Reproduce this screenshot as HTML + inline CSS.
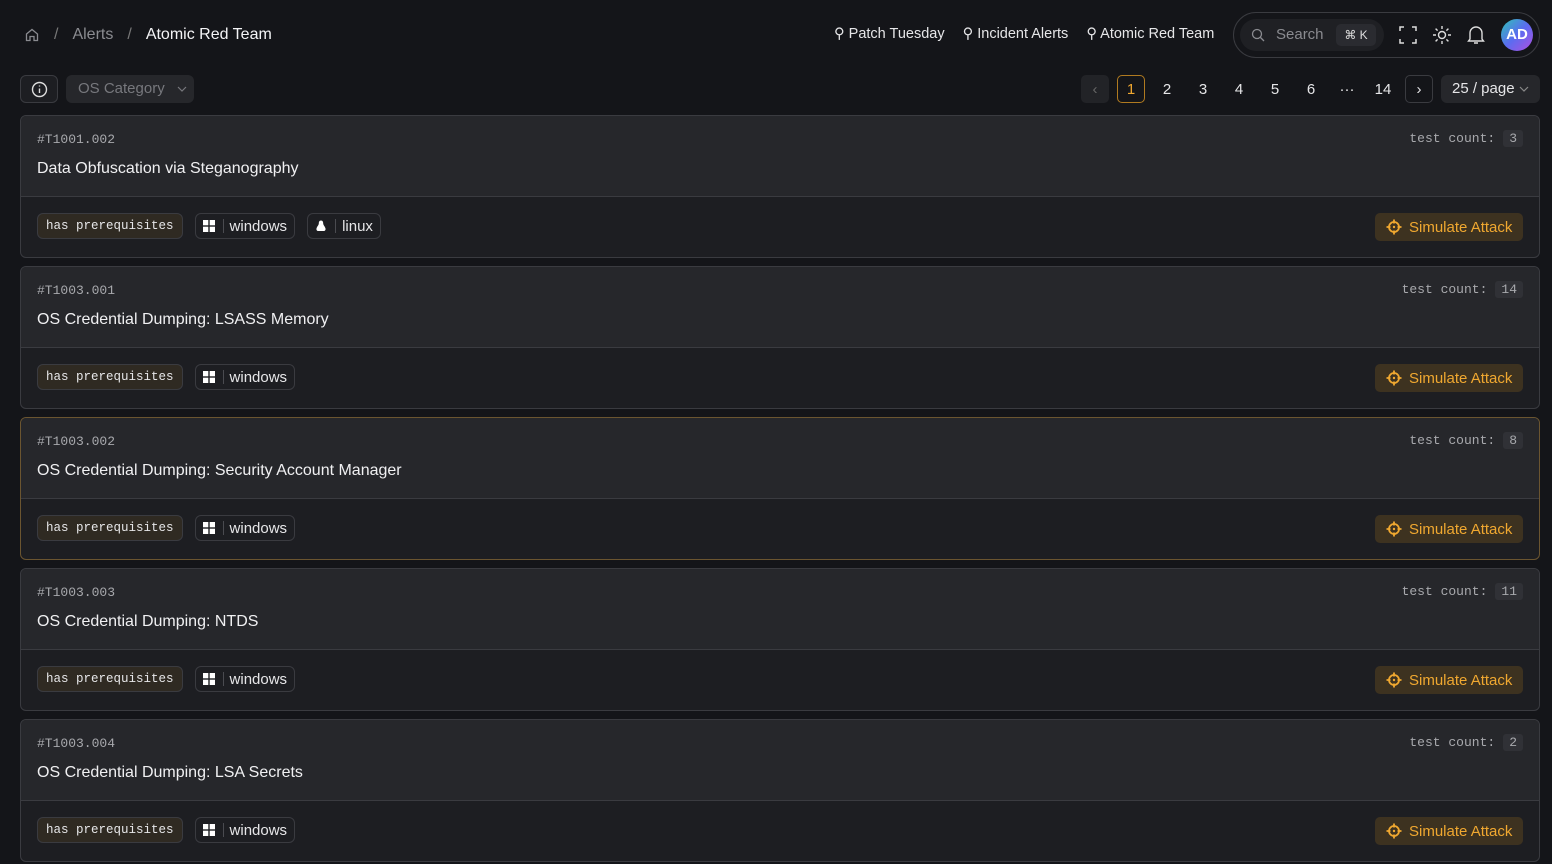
<!DOCTYPE html><html><head><style>
*{box-sizing:border-box;margin:0;padding:0}
body{width:1552px;height:864px;background:#141519;font-family:"Liberation Sans",sans-serif;color:#e6e6e8;overflow:hidden;position:relative}
.mono{font-family:"Liberation Mono",monospace}
.abs{position:absolute}
.bc{left:24px;top:24px;font-size:16px;display:flex;align-items:center;gap:14px;height:22px}
.nav{top:26px;font-size:14.5px;display:flex;gap:18px;left:834px;color:#e6e6e8}
.pill{left:1233px;top:12px;width:307px;height:46px;border:1px solid #3a3b40;border-radius:23px}
.search{left:1240px;top:19px;width:144px;height:32px;background:#1f2024;border-radius:16px;font-size:14px;color:#8a8b90}
.card{position:absolute;left:20px;width:1520px;height:143px;border:1px solid #3a3b40;border-radius:6px;overflow:hidden;background:#1d1e22}
.card .h{height:81px;background:#26272b;border-bottom:1px solid #3a3b40;position:relative}
.id{position:absolute;left:16px;top:16px;font-size:13px;color:#a8a9ad}
.t{position:absolute;left:16px;top:44px;font-size:16px;color:#f0f0f2}
.tc{position:absolute;right:16px;top:14px;font-size:13px;color:#a8a9ad;display:flex;align-items:center;gap:8px}
.tc b{font-weight:normal;background:#303136;padding:1px 6px;border-radius:3px}
.tags{position:absolute;left:16px;top:16px;display:flex;gap:12px}
.tag{height:26px;border:1px solid #3a3b40;border-radius:6px;display:flex;align-items:center;padding:0 7px;font-size:15px}
.pre{background:#2f2a22;font-size:12.5px;padding:0 8px}
.os i{display:inline-block;width:1px;height:14px;background:#4a4b50;margin:0 6px 0 8px}
.sim{position:absolute;right:16px;top:16px;height:28px;width:148px;background:#3d3220;color:#f0a830;border-radius:5px;font-size:15px;display:flex;align-items:center;padding:0 0 0 11px;gap:7px}
.pg{top:75px;height:28px;font-size:15px;display:flex;align-items:center;justify-content:center;width:28px;border-radius:5px}
</style></head><body>
<div class="abs bc"><svg width="16" height="16" viewBox="0 0 16 16" fill="none" stroke="#8a8b90" stroke-width="1.3"><path d="M2.5 7L8 2.5 13.5 7V13.5H10V9.5H6V13.5H2.5Z"/></svg><span style="color:#777">/</span><span style="color:#8a8b90">Alerts</span><span style="color:#777">/</span><span style="color:#f4f4f6">Atomic Red Team</span></div>
<div class="abs nav"><span>⚲ Patch Tuesday</span><span>⚲ Incident Alerts</span><span>⚲ Atomic Red Team</span></div>
<div class="abs pill"></div>
<div class="abs search"><svg class="abs" style="left:11px;top:9px" width="14" height="14" viewBox="0 0 14 14" fill="none" stroke="#8a8b90" stroke-width="1.3"><circle cx="6" cy="6" r="4.5"/><path d="M9.5 9.5L13 13"/></svg><span class="abs" style="left:36px;top:7px;font-size:15px">Search</span><span class="abs" style="left:96px;top:5px;width:40px;height:22px;background:#2a2b30;border-radius:5px;color:#ddd;font-size:12px;text-align:center;line-height:22px">⌘ K</span></div>
<svg class="abs" style="left:1399px;top:26px" width="18" height="18" viewBox="0 0 18 18" fill="none" stroke="#ddd" stroke-width="1.5"><path d="M1 5V1H5M13 1H17V5M17 13V17H13M5 17H1V13"/></svg>
<svg class="abs" style="left:1432px;top:25px" width="20" height="20" viewBox="0 0 20 20" fill="none" stroke="#ddd" stroke-width="1.4"><circle cx="10" cy="10" r="3.5"/><path d="M10 1v3M10 16v3M1 10h3M16 10h3M3.6 3.6l2 2M14.4 14.4l2 2M3.6 16.4l2-2M14.4 5.6l2-2"/></svg>
<svg class="abs" style="left:1467px;top:25px" width="18" height="20" viewBox="0 0 18 20" fill="none" stroke="#ddd" stroke-width="1.4"><path d="M3 14V8a6 6 0 0 1 12 0v6l1.5 2h-15z M7 18h4"/></svg>
<div class="abs" style="left:1501px;top:19px;width:32px;height:32px;border-radius:50%;background:linear-gradient(135deg,#2ec4b6,#5b6cf0,#b04fe0);color:#fff;font-weight:bold;font-size:15px;text-align:center;line-height:32px">AD</div>
<div class="abs" style="left:20px;top:75px;width:38px;height:28px;border:1px solid #3a3b40;border-radius:6px;background:#1d1e22"><svg class="abs" style="left:10px;top:5px" width="17" height="17" viewBox="0 0 17 17" fill="none" stroke="#ddd" stroke-width="1.4"><circle cx="8.5" cy="8.5" r="7"/><path d="M8.5 7.5v4.5M8.5 4.5v1"/></svg></div>
<div class="abs" style="left:66px;top:75px;width:128px;height:28px;border-radius:6px;background:#26272b;color:#77787d;font-size:15px;line-height:28px;padding-left:12px">OS Category <svg width="10" height="6" style="margin-left:8px;vertical-align:middle" viewBox="0 0 10 6" fill="none" stroke="#77787d" stroke-width="1.2"><path d="M1 1l4 4 4-4"/></svg></div>
<div class="abs pg" style="left:1081px;background:#222327;color:#666">‹</div>
<div class="abs pg" style="left:1117px;border:1px solid #b07a20;color:#f0a830">1</div>
<div class="abs pg" style="left:1153px">2</div><div class="abs pg" style="left:1189px">3</div><div class="abs pg" style="left:1225px">4</div><div class="abs pg" style="left:1261px">5</div><div class="abs pg" style="left:1297px">6</div><div class="abs pg" style="left:1333px">···</div><div class="abs pg" style="left:1369px">14</div>
<div class="abs pg" style="left:1405px;border:1px solid #3a3b40">›</div>
<div class="abs" style="left:1441px;top:75px;width:99px;height:28px;border-radius:6px;background:#26272b;font-size:15px;line-height:28px;padding-left:11px">25 / page <svg width="10" height="6" style="vertical-align:middle" viewBox="0 0 10 6" fill="none" stroke="#888" stroke-width="1.2"><path d="M1 1l4 4 4-4"/></svg></div>

<svg width="0" height="0" style="position:absolute"><defs>
<symbol id="win" viewBox="0 0 12 12"><rect x="0" y="0" width="5.3" height="5.3" fill="#fff"/><rect x="6.7" y="0" width="5.3" height="5.3" fill="#fff"/><rect x="0" y="6.7" width="5.3" height="5.3" fill="#fff"/><rect x="6.7" y="6.7" width="5.3" height="5.3" fill="#fff"/></symbol>
<symbol id="tgt" viewBox="0 0 16 16"><g fill="none" stroke="#f0a830" stroke-width="1.8"><circle cx="8" cy="8" r="5"/><path d="M8 0.5v4M8 11.5v4M0.5 8h4M11.5 8h4"/></g><circle cx="8" cy="8" r="1.2" fill="#f0a830"/></symbol>
<symbol id="tux" viewBox="0 0 12 12"><path d="M6 0.5C4.3 0.5 3.8 2 3.8 3.5 3.8 5 2 6.5 1.5 8.5 1.2 9.8 2 11 3 11H9c1 0 1.8-1.2 1.5-2.5C10 6.5 8.2 5 8.2 3.5 8.2 2 7.7.5 6 .5Z" fill="#fff"/></symbol>
</defs></svg>

<div class="card" style="top:115px"><div class="h"><span class="id mono">#T1001.002</span><span class="t">Data Obfuscation via Steganography</span><span class="tc mono">test count: <b>3</b></span></div><div style="position:relative"><div class="tags"><span class="tag pre mono">has prerequisites</span><span class="tag os"><svg width="12" height="12"><use href="#win"/></svg><i></i>windows</span><span class="tag os"><svg width="12" height="12"><use href="#tux"/></svg><i></i>linux</span></div><span class="sim"><svg width="16" height="16"><use href="#tgt"/></svg>Simulate Attack</span></div></div>
<div class="card" style="top:266px"><div class="h"><span class="id mono">#T1003.001</span><span class="t">OS Credential Dumping: LSASS Memory</span><span class="tc mono">test count: <b>14</b></span></div><div style="position:relative"><div class="tags"><span class="tag pre mono">has prerequisites</span><span class="tag os"><svg width="12" height="12"><use href="#win"/></svg><i></i>windows</span></div><span class="sim"><svg width="16" height="16"><use href="#tgt"/></svg>Simulate Attack</span></div></div>
<div class="card" style="top:417px;border-color:#6b5530"><div class="h"><span class="id mono">#T1003.002</span><span class="t">OS Credential Dumping: Security Account Manager</span><span class="tc mono">test count: <b>8</b></span></div><div style="position:relative"><div class="tags"><span class="tag pre mono">has prerequisites</span><span class="tag os"><svg width="12" height="12"><use href="#win"/></svg><i></i>windows</span></div><span class="sim"><svg width="16" height="16"><use href="#tgt"/></svg>Simulate Attack</span></div></div>
<div class="card" style="top:568px"><div class="h"><span class="id mono">#T1003.003</span><span class="t">OS Credential Dumping: NTDS</span><span class="tc mono">test count: <b>11</b></span></div><div style="position:relative"><div class="tags"><span class="tag pre mono">has prerequisites</span><span class="tag os"><svg width="12" height="12"><use href="#win"/></svg><i></i>windows</span></div><span class="sim"><svg width="16" height="16"><use href="#tgt"/></svg>Simulate Attack</span></div></div>
<div class="card" style="top:719px"><div class="h"><span class="id mono">#T1003.004</span><span class="t">OS Credential Dumping: LSA Secrets</span><span class="tc mono">test count: <b>2</b></span></div><div style="position:relative"><div class="tags"><span class="tag pre mono">has prerequisites</span><span class="tag os"><svg width="12" height="12"><use href="#win"/></svg><i></i>windows</span></div><span class="sim"><svg width="16" height="16"><use href="#tgt"/></svg>Simulate Attack</span></div></div>
</body></html>
